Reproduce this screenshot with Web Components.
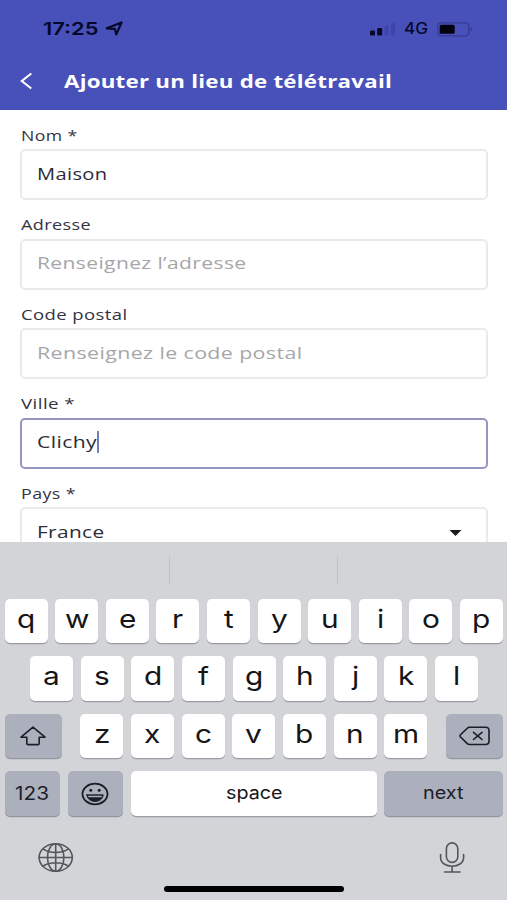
<!DOCTYPE html>
<html lang="fr">
<head>
<meta charset="utf-8">
<title>Ajouter un lieu de télétravail</title>
<style>
html,body{margin:0;height:900px;overflow:hidden;background:#fff}
</style>
</head>
<body>
<telework-screen></telework-screen>
<script>
const define=(name,html,setup)=>customElements.define(name,class extends HTMLElement{
  connectedCallback(){
    if(this.shadowRoot)return;
    const t=document.createElement('template');
    t.innerHTML=typeof html==='function'?html(this):html;
    this.attachShadow({mode:'open'}).append(t.content.cloneNode(true));
    if(setup)setup(this);
  }
});

/* Text drawn in an extended width: "w" is the final width, "s" a plain factor. */
define('wide-text',`<style>
:host{display:inline-block;white-space:nowrap;flex:none}
span{display:inline-block;transform-origin:0 50%}
</style><span><slot></slot></span>`,el=>{
  const span=el.shadowRoot.querySelector('span');
  const n=span.getBoundingClientRect().width;
  const w=el.hasAttribute('w')?+el.getAttribute('w'):n*(+el.getAttribute('s')||1.2);
  span.style.transform=`scaleX(${w/n})`;
  span.style.width=n+'px';
  el.style.width=w+'px';
});

define('status-bar',`<style>
:host{display:flex;height:56px;padding:2px 34px 0 43px;align-items:center;box-sizing:border-box;color:#06082a;font:600 17.5px/20px Inter,sans-serif}
svg{display:block;flex:none}
.plane{margin-left:6px}.bars{margin-left:auto}.net{margin-left:9px;font-size:15.5px;font-weight:500}.bat{margin-left:9px}
</style>
<wide-text w="55.5">17:25</wide-text>
<svg class="plane" width="19" height="16" viewBox="0 0 19 16"><path d="M1.800 7.300 16.500 1.500 11.300 13.400 9.800 7.900Z" fill="none" stroke="#06082a" stroke-width="2.200" stroke-linejoin="round"/></svg>
<svg class="bars" width="27" height="14" viewBox="0 0 27 14"><g fill="#06082a"><rect x="2" y="8.500" width="5" height="5" rx="1.200"/><rect x="9.200" y="6" width="5" height="7.500" rx="1.200"/></g><g fill="#3f45a8"><rect x="16.500" y="3.500" width="4" height="10" rx="1"/><rect x="23" y="1" width="4" height="12.500" rx="1"/></g></svg>
<wide-text class="net" w="24">4G</wide-text>
<svg class="bat" width="36" height="15" viewBox="0 0 36 15"><rect x=".8" y=".8" width="31" height="13" rx="3.5" fill="none" stroke="#363b92" stroke-width="1.2"/><rect x="2.7" y="2.8" width="15" height="9" rx="1.6" fill="#02030f"/><path d="M33.7 5q2 2.4 0 4.8z" fill="#292d78"/></svg>`);

define('title-bar',`<style>
:host{display:flex;height:54px;padding:0 20px;box-sizing:border-box;color:#fff;font:700 18.5px/24px "Open Sans",sans-serif}
svg{margin:16px 31px 0 0;flex:none}
wide-text{margin-top:13px;letter-spacing:.2px}
</style>
<svg width="13" height="18" viewBox="0 0 13 18"><path d="M11.300 1.500 1.800 9l9.500 7.500" fill="none" stroke="#fff" stroke-width="2.100"/></svg>
<wide-text w="328"><slot></slot></wide-text>`);

define('form-field',el=>`<style>
:host{display:block;height:79.5px;margin-bottom:10px;color:#34333f}
.label{height:28.5px;padding:5px 0 0 .5px;box-sizing:border-box;font:450 13.8px/20px "Open Sans",sans-serif;display:flex}
.box{height:51px;box-sizing:border-box;border:2px solid #e9eaec;border-radius:5px;padding:0 24.5px 2px 14.5px;display:flex;align-items:center;font:450 16.5px/24px "Open Sans",sans-serif;color:#2c2b38;background:#fff}
:host([placeholder]) .box{color:#a6a6a8}
:host([focused]) .box{border-color:#9596bf}
wide-text{letter-spacing:.3px}
.caret{width:2px;height:22px;background:#7180bb}
svg{margin:3px 0 0 auto}
</style>
<div class="label"><wide-text w="${el.getAttribute('lw')}">${el.getAttribute('label')}</wide-text></div>
<div class="box"><wide-text w="${el.getAttribute('vw')}"><slot></slot></wide-text>${el.hasAttribute('focused')?'<i class="caret"></i>':''}${el.hasAttribute('select')?'<svg width="13" height="6" viewBox="0 0 13 6"><path d="M.5 0h12l-6 6z" fill="#1a1a1f"/></svg>':''}</div>`);

define('key-cap',`<style>
:host{display:flex;flex:1 1 0;height:44.5px;box-sizing:border-box;border-radius:5px;background:#fff;box-shadow:0 1.2px 0 #9b9da3;justify-content:center;align-items:center;color:#151518;font:400 25.5px/30px Inter,sans-serif;padding-bottom:4px}
:host([wide]){font-size:18px;padding-bottom:2px}
:host([grey]){background:#abb0bc;box-shadow:0 1.2px 0 #94979f;padding-bottom:0;color:#1c1e28}
</style><slot></slot>`);

const letters=s=>[...s].map(c=>`<key-cap><wide-text s="1.17">${c}</wide-text></key-cap>`).join('');
define('touch-keyboard',`<style>
:host{display:block;height:358px;background:#d2d4d8;box-sizing:border-box}
.suggest{height:56.5px;display:grid;grid-template-columns:169.5px 168.5px 1fr}
.suggest i{margin:14px 0 15px;border-right:1.3px solid #c0c2c7}
.suggest i:last-child{border:0}
.row{display:flex;gap:7.6px;padding:0 4px 0 4.7px;height:44.5px;margin-bottom:13.1px}
.r2{padding:0 29px 0 30px}
.r3 .mid{display:flex;flex:1;gap:7.6px;margin:0 11px}
.side{flex:0 0 57px}
.k123{flex:0 0 55.3px;font-size:18px}.smile{flex:0 0 55.6px}.space{flex:0 0 246px}
.next{padding-bottom:2px}
.tools{display:flex;justify-content:space-between;padding:13px 42.5px 0 37px}
.home{width:180px;height:5.4px;border-radius:3px;background:#000;margin:12.5px auto 0 164px}
svg{display:block;fill:none;stroke:#1b1d27;stroke-width:1.6;stroke-linejoin:round;stroke-linecap:round}
.tools svg{stroke:#54565b}
</style>
<div class="suggest"><i></i><i></i><i></i></div>
<div class="row">${letters('qwertyuiop')}</div>
<div class="row r2">${letters('asdfghjkl')}</div>
<div class="row r3"><key-cap class="side" grey><svg width="28" height="20" viewBox="0 0 28 20"><path d="M14 1.200 2 11.200h5.800v6q0 1.400 1.400 1.400h9.600q1.400 0 1.400-1.400v-6H26z"/></svg></key-cap><div class="mid">${letters('zxcvbnm')}</div><key-cap class="side" grey><svg width="32" height="20" viewBox="0 0 32 20"><path d="M10.500 1.300h16q3.500 0 3.500 3.200v10.800q0 3.200-3.500 3.200h-16q-1.300 0-2.200-.9L1.500 11q-1-1.100 0-2.200l6.800-6.600q.9-.9 2.200-.9zM14.500 6.300l8.500 7.200M23 6.300l-8.500 7.200"/></svg></key-cap></div>
<div class="row"><key-cap class="k123" wide grey><wide-text w="34">123</wide-text></key-cap><key-cap class="smile" grey><svg width="28" height="24" viewBox="0 0 28 24"><ellipse cx="14" cy="12" rx="12.500" ry="10.300" stroke-width="1.800"/><path d="M5.800 12.800h16.400c-.6 9-15.800 9-16.400 0z" fill="#1b1d27" stroke-width=".8"/><path d="M7.800 14.500h12.400" stroke="#abb0bc" stroke-width="1.500"/><ellipse cx="9.800" cy="8.300" rx="1.500" ry="1.500" fill="#1b1d27" stroke="none"/><ellipse cx="18.200" cy="8.300" rx="1.500" ry="1.500" fill="#1b1d27" stroke="none"/></svg></key-cap><key-cap class="space" wide><wide-text w="56.500">space</wide-text></key-cap><key-cap class="next" wide grey><wide-text w="40.500">next</wide-text></key-cap></div>
<div class="tools">
<svg width="37" height="32" viewBox="0 0 37 32" stroke-width="1.800"><ellipse cx="18.700" cy="15.500" rx="16.600" ry="13.800"/><ellipse cx="18.700" cy="15.500" rx="8.200" ry="13.800"/><path d="M18.700 1.700v27.600M2.100 15.500h33.200M6 6.800c6 4.700 19.400 4.700 25.400 0M6 24.200c6-4.700 19.400-4.700 25.400 0"/></svg>
<svg width="26" height="32" viewBox="0 0 26 32"><rect x="7.400" y=".9" width="11.400" height="19.500" rx="5.700"/><path d="M1.600 12.500v3c0 11.600 23 11.600 23 0v-3M13.100 24.200v5.800M5.500 30h15.600"/></svg>
</div>
<div class="home"></div>`);

define('telework-screen',`<style>
:host{display:flex;flex-direction:column;width:507px;height:900px;overflow:hidden;background:#fff}
header{height:110px;flex:none;background:#4850b9}
main{flex:1;min-height:0;overflow:hidden;padding:10.500px 19px 0 20px}
touch-keyboard{flex:none}
</style>
<header><status-bar></status-bar><title-bar>Ajouter un lieu de télétravail</title-bar></header>
<main>
<form-field label="Nom *" lw="56.5" vw="70.5">Maison</form-field>
<form-field label="Adresse" lw="70" vw="209.5">Renseignez l’adresse</form-field>
<form-field label="Code postal" lw="106.5" vw="265.5">Renseignez le code postal</form-field>
<form-field label="Ville *" lw="54" vw="60" focused>Clichy</form-field>
<form-field label="Pays *" lw="55" vw="67.5" select>France</form-field>
</main>
<touch-keyboard></touch-keyboard>`.replace(/vw="(209|265)/g,'placeholder vw="$1'));
</script>
</body>
</html>
